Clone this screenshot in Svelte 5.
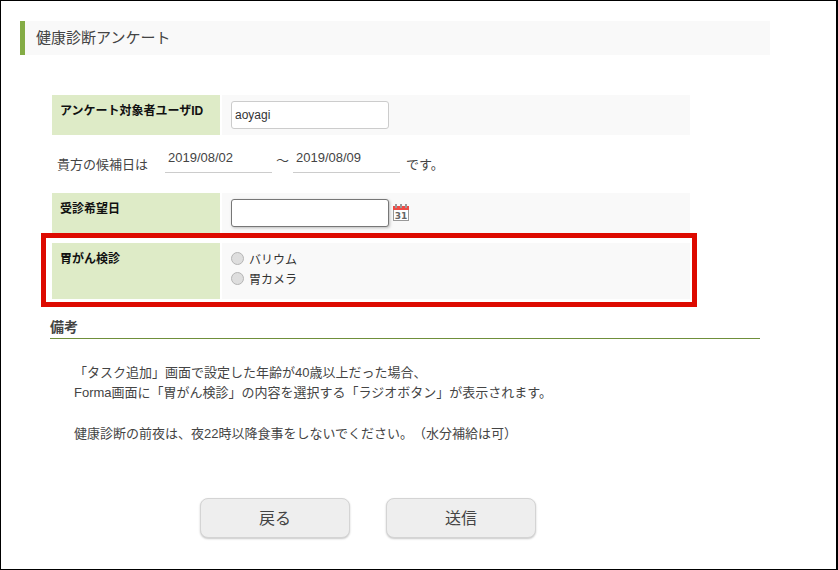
<script>
  const notes = [
    '「タスク追加」画面で設定した年齢が40歳以上だった場合、',
    'Forma画面に「胃がん検診」の内容を選択する「ラジオボタン」が表示されます。',
    '',
    '健康診断の前夜は、夜22時以降食事をしないでください。（水分補給は可）'
  ];
</script>

<div class="frame">
  <h1 class="title">健康診断アンケート</h1>

  <section class="form">
    <div class="row row-id">
      <div class="label">アンケート対象者ユーザID</div>
      <div class="value"><input class="text" value="aoyagi" /></div>
    </div>

    <div class="dates">
      <span class="lead">貴方の候補日は</span>
      <span class="date">2019/08/02</span>
      <span class="tilde">～</span>
      <span class="date">2019/08/09</span>
      <span class="tail">です。</span>
    </div>

    <div class="row row-date">
      <div class="label">受診希望日</div>
      <div class="value">
        <input class="text focus" />
        <svg class="cal" width="18" height="18" viewBox="0 0 18 18">
          <rect x="1.5" y="3.5" width="15" height="14" fill="#fff" stroke="#999" />
          <rect x="1" y="3" width="16" height="4" fill="#ee4b45" />
          <rect x="3" y="1" width="2" height="4" fill="#999" />
          <rect x="8" y="1" width="2" height="4" fill="#999" />
          <rect x="13" y="1" width="2" height="4" fill="#999" />
          <text x="9" y="16" class="cal-num">31</text>
        </svg>
      </div>
    </div>

    <div class="row row-radio">
      <div class="label">胃がん検診</div>
      <div class="value radios">
        <label class="radio"><span class="dot"></span>バリウム</label>
        <label class="radio"><span class="dot"></span>胃カメラ</label>
      </div>
    </div>
    <div class="highlight"></div>
  </section>

  <section class="notes">
    <h2>備考</h2>
    <div class="note-body">
      {#each notes as n}
        <p>{n}</p>
      {/each}
    </div>
  </section>

  <div class="buttons">
    <button>戻る</button>
    <button>送信</button>
  </div>
</div>

<style>
  :global(body) {
    margin: 0;
    background: #fff;
  }
  .frame {
    width: 838px;
    height: 570px;
    box-sizing: border-box;
    border: 1px solid #000;
    border-right-width: 2px;
    border-top-width: 1px;
    padding-top: 20px;
    font-family: "Liberation Sans", "Noto Sans CJK JP", sans-serif;
    font-size: 12px;
    color: #333;
    background: #fff;
    overflow: hidden;
    text-spacing-trim: space-all;
  }
  .title {
    margin: 0 0 0 19px;
    width: 750px;
    height: 34px;
    box-sizing: border-box;
    border-left: 5px solid #84ac45;
    background: #f9f9f9;
    padding-left: 11px;
    font-size: 15px;
    font-weight: normal;
    line-height: 34px;
    color: #444;
  }
  .form {
    position: relative;
    margin: 40px 0 0 51px;
    width: 638px;
  }
  .row {
    display: flex;
    gap: 2px;
  }
  .label {
    width: 168px;
    box-sizing: border-box;
    padding: 8px 8px;
    background: #deebc7;
    font-weight: bold;
    line-height: 16px;
    color: #111;
  }
  .value {
    flex: 1;
    background: #f9f9f9;
    box-sizing: border-box;
    padding: 6px 9px;
    display: flex;
    align-items: flex-start;
  }
  .row-id { height: 40px; }
  .row-date { height: 43px; margin-bottom: 7px; }
  .row-radio { height: 56px; }
  .text {
    width: 158px;
    height: 28px;
    box-sizing: border-box;
    border: 1px solid #ccc;
    border-radius: 3px;
    padding: 0 3px;
    background: #fff;
    font: 12px "Liberation Sans", sans-serif;
    color: #333;
    outline: none;
  }
  .focus {
    border-color: #777;
    box-shadow: 1px 1px 3px rgba(0, 0, 0, 0.25);
  }
  .cal {
    margin: 4px 0 0 3px;
  }
  .cal-num {
    font: bold 9px "DejaVu Sans", sans-serif;
    fill: #666;
    text-anchor: middle;
  }
  .dates {
    height: 58px;
    box-sizing: border-box;
    display: flex;
    align-items: flex-start;
    padding-top: 15px;
    color: #444;
    font-size: 13px;
  }
  .lead {
    margin: 4px 0 0 5px;
    width: 108px;
  }
  .date {
    width: 107px;
    height: 23px;
    box-sizing: border-box;
    border-bottom: 1px solid #ccc;
    padding-left: 3px;
    line-height: 16px;
    color: #444;
  }
  .tilde {
    width: 21px;
    text-align: center;
  }
  .tail {
    margin: 4px 0 0 6px;
  }
  .radios {
    flex-direction: column;
    padding: 5px 9px;
  }
  .radio {
    display: flex;
    align-items: center;
    height: 20px;
    gap: 6px;
    color: #333;
  }
  .dot {
    width: 13px;
    height: 13px;
    box-sizing: border-box;
    border-radius: 50%;
    border: 1px solid #b5b5b5;
    background: #dedede;
    margin-right: -1px;
  }
  .highlight {
    position: absolute;
    left: -11px;
    top: 138px;
    width: 656px;
    height: 74px;
    box-sizing: border-box;
    border: 5px solid #dd0a00;
    pointer-events: none;
  }
  .notes {
    margin: 20px 0 0 49px;
    width: 710px;
  }
  h2 {
    margin: 0;
    height: 19px;
    border-bottom: 1px solid #6f8f3a;
    font-size: 14px;
    line-height: 17px;
    color: #444;
  }
  .note-body {
    padding: 24px 0 0 24px;
    color: #444;
    font-size: 13px;
    line-height: 20.2px;
    height: 83px;
  }
  p {
    margin: 0;
    min-height: 20.2px;
  }
  .buttons {
    display: flex;
    gap: 36px;
    margin: 52px 0 0 199px;
  }
  button {
    width: 150px;
    height: 40px;
    box-sizing: border-box;
    border: 1px solid #d4d4d4;
    border-radius: 8px;
    background: #eee;
    box-shadow: 0 1px 2px rgba(0, 0, 0, 0.22);
    font: 16px "Liberation Sans", "Noto Sans CJK JP", sans-serif;
    color: #444;
    padding: 0 0 2px;
  }
</style>
